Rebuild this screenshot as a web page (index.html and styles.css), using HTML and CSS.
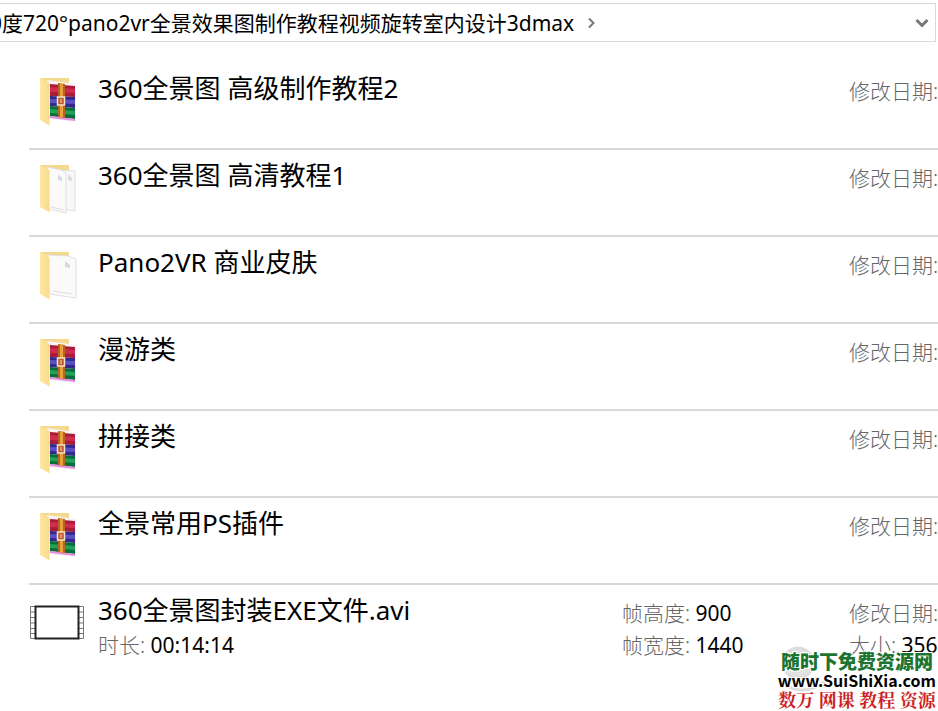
FILE: index.html
```
<!DOCTYPE html>
<html lang="zh-CN">
<head>
    <meta charset="UTF-8">
    <meta name="viewport" content="width=device-width, initial-scale=1.0">
    <title>360度720°pano2vr全景效果图制作教程</title>
    <link rel="stylesheet" href="styles.css">
</head>
<body>
    <!-- Shared icons -->
    <svg class="symbols" aria-hidden="true">
        <linearGradient id="flap" x1="0" x2="1">
            <stop offset="0" stop-color="#ffe6a4"/>
            <stop offset="1" stop-color="#f9db8a"/>
        </linearGradient>
        <symbol id="folder" viewBox="0 0 54 54">
            <path d="M10 4h29v40H19z" fill="#f3d98e"/>
        </symbol>
        <symbol id="folder-front" viewBox="0 0 54 54">
            <path d="M10 4l8 4q1.500 1 1.500 3v40.500L10 46z" fill="url(#flap)"/>
        </symbol>
        <symbol id="archive" viewBox="0 0 54 54">
            <use href="#folder"/>
            <path d="M17 6l29 4v38l-27-3z" fill="#f9f2f8"/>
            <path d="M20 10l25 2v11l-25-1z" fill="#a81c3c"/>
            <path d="M20 13l25 2v4l-25-1z" fill="#d02c50"/>
            <path d="M20 22l25 1v11l-25-2z" fill="#33288c"/>
            <path d="M20 25l25 1v4l-25-1z" fill="#5a50c4"/>
            <path d="M20 32l25 2v11l-25-3z" fill="#0b6b3c"/>
            <path d="M20 35l25 2v4l-25-2z" fill="#22a055"/>
            <path d="M20 42l25 3v2l-25-3z" fill="#e58ae0"/>
            <path d="M28 9l7 1v34l-7-1z" fill="#b8661e"/>
            <path d="M30 9l3 1v34l-3-1z" fill="#e8a040"/>
            <path d="M27.500 23h7v8h-7z" fill="#c0582c" stroke="#f3e4c8" stroke-width="1.500"/>
            <path d="M31 25v4" stroke="#f3e4c8"/>
            <use href="#folder-front"/>
        </symbol>
        <symbol id="documents" viewBox="0 0 54 54">
            <use href="#folder"/>
            <path d="M30 9l15 1v40l-15-2z" fill="#f8f8f8" stroke="#e0e0e0"/>
            <path d="M17 6l14 3 5 3v40l-17-4z" fill="#fafafa" stroke="#e0e0e0"/>
            <path d="M28 13v6l4 1v-3zM38 13v6l4 1v-3z" fill="#d9dadf"/>
            <path d="M21 46l13 3" stroke="#ddd"/>
            <use href="#folder-front"/>
        </symbol>
        <symbol id="document" viewBox="0 0 54 54">
            <use href="#folder"/>
            <path d="M17 7l21 1 8 3v39l-27-4z" fill="#fafafa" stroke="#e0e0e0"/>
            <path d="M35 13v6l5 1v-3z" fill="#d9dadf"/>
            <path d="M23 43l19 3" stroke="#ddd"/>
            <use href="#folder-front"/>
        </symbol>
        <symbol id="video" viewBox="0 0 54 36">
            <path d="M.5 1.500h53v32H.5z" fill="#fff" stroke="#777"/>
            <path d="M1 7h52M1 12.500h52M1 18h52M1 23.500h52M1 28.500h52" stroke="#777"/>
            <path d="M5.500 1.500h43v32h-43z" fill="#fff" stroke="#222" stroke-width="2"/>
        </symbol>
    </svg>

    <header class="address-bar">
        <span class="path">0度720°pano2vr全景效果图制作教程视频旋转室内设计3dmax</span>
        <svg class="separator" viewBox="0 0 10 12"><path d="M2 1.500l4.500 4.500L2 10.500"/></svg>
        <button class="history" type="button" aria-label="以前的位置">
            <svg viewBox="0 0 14 10"><path d="M1.500 2L7 7.500 12.500 2"/></svg>
        </button>
    </header>

    <main>
        <ul class="files">
            <li class="file">
                <svg class="icon"><use href="#archive"/></svg>
                <div class="name">360全景图 高级制作教程2</div>
                <div class="details date"><span>修改日期:</span></div>
            </li>
            <li class="file">
                <svg class="icon"><use href="#documents"/></svg>
                <div class="name">360全景图 高清教程1</div>
                <div class="details date"><span>修改日期:</span></div>
            </li>
            <li class="file">
                <svg class="icon"><use href="#document"/></svg>
                <div class="name">Pano2VR 商业皮肤</div>
                <div class="details date"><span>修改日期:</span></div>
            </li>
            <li class="file">
                <svg class="icon"><use href="#archive"/></svg>
                <div class="name">漫游类</div>
                <div class="details date"><span>修改日期:</span></div>
            </li>
            <li class="file">
                <svg class="icon"><use href="#archive"/></svg>
                <div class="name">拼接类</div>
                <div class="details date"><span>修改日期:</span></div>
            </li>
            <li class="file">
                <svg class="icon"><use href="#archive"/></svg>
                <div class="name">全景常用PS插件</div>
                <div class="details date"><span>修改日期:</span></div>
            </li>
            <li class="file">
                <svg class="icon"><use href="#video"/></svg>
                <div>
                    <div class="name">360全景图封装EXE文件.avi</div>
                    <div class="length"><span>时长:</span> 00:14:14</div>
                </div>
                <div class="details">
                    <div><span>帧高度:</span> 900</div>
                    <div><span>帧宽度:</span> 1440</div>
                </div>
                <div class="details date">
                    <div><span>修改日期:</span></div>
                    <div><span>大小:</span> 356</div>
                </div>
            </li>
        </ul>
    </main>

    <div class="watermark">
        <svg class="seal" viewBox="0 0 60 60">
            <circle cx="24" cy="24" r="15"/>
            <path d="M14 20q10-9 20 0M12 46q18 12 40-4"/>
        </svg>
        <div class="site-name">随时下免费资源网</div>
        <div class="site-url">www.SuiShiXia.com</div>
        <div class="site-tags">数万 网课 教程 资源</div>
    </div>
</body>
</html>
```
FILE: styles.css
```
* {
    box-sizing: border-box;
}

body {
    position: relative;
    min-height: 100vh;
    margin: 0;
    overflow-x: hidden;
    background-color: #fff;
    color: #000;
    font-family: "Noto Sans", "Noto Sans CJK SC", sans-serif;
}

.symbols {
    position: absolute;
    width: 0;
    height: 0;
}

.address-bar {
    display: flex;
    align-items: center;
    height: 39px;
    margin: 3px 2px 0 0;
    border: 1px solid #d9d9d9;
    border-left: none;
    font-size: 21px;
    white-space: nowrap;
    overflow: hidden;
}

.path {
    margin-left: -10px;
    padding-bottom: 2px;
}

.separator {
    width: 10px;
    height: 12px;
    margin-left: 13px;
}

.separator path,
.history path {
    fill: none;
    stroke: #777;
    stroke-width: 2;
}

.history {
    display: flex;
    margin-left: auto;
    padding: 6px;
    border: none;
    background: none;
    cursor: pointer;
}

.history svg {
    width: 14px;
    height: 10px;
}

.history path {
    stroke-width: 3;
}

.files {
    margin: 0;
    padding: 21px 0 0 29px;
    list-style: none;
}

.file {
    display: grid;
    grid-template-columns: 55px 1fr 227px 89px;
    height: 87px;
    padding-top: 7px;
    border-bottom: 2px solid #d9d9d9;
    white-space: nowrap;
    overflow: hidden;
}

.file:last-child {
    border-bottom: none;
}

.icon {
    width: 54px;
    height: 54px;
    margin: 4px 0 0 1px;
}

.name {
    padding-left: 14px;
    font-size: 26px;
    line-height: 36px;
}

.details,
.length {
    font-size: 21px;
    line-height: 32px;
}

.details {
    padding-top: 5px;
}

.length {
    padding: 1px 0 0 14px;
}

.details span,
.length span {
    color: #666;
    font-weight: 300;
}

.date {
    grid-column: 4;
}

.watermark {
    position: absolute;
    right: 2px;
    bottom: 2px;
    font-family: "Noto Sans CJK SC", sans-serif;
    font-weight: 700;
    text-align: center;
    white-space: nowrap;
    text-shadow: 1px 1px #fff, -1px -1px #fff, 1px -1px #fff, -1px 1px #fff;
}

.site-name {
    color: #1c7430;
    font-size: 19px;
    font-weight: 900;
    line-height: 20px;
}

.site-url {
    font-family: "Liberation Sans Narrow", "Noto Sans CJK SC", sans-serif;
    font-size: 16px;
    line-height: 19px;
}

.site-tags {
    color: #cc1f26;
    font-family: "Noto Serif CJK SC", "Noto Sans CJK SC", serif;
    font-size: 18px;
    line-height: 19px;
}

.seal {
    position: absolute;
    top: -12px;
    left: -4px;
    z-index: -1;
    width: 60px;
    height: 60px;
    fill: none;
    stroke: #ddd;
    stroke-width: 3;
}

.seal circle {
    fill: #e2e2e2;
}
```
